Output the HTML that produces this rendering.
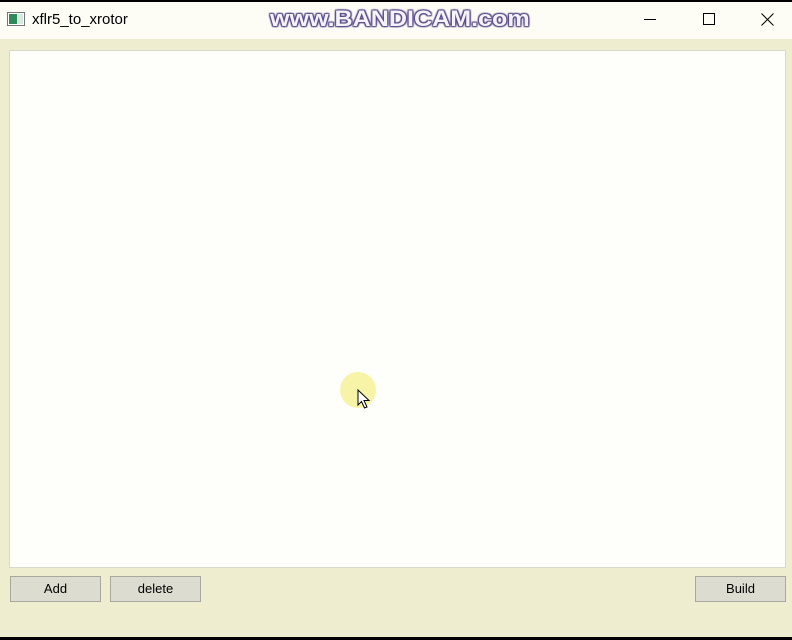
<!DOCTYPE html>
<html><head><meta charset="utf-8"><style>
html,body{margin:0;padding:0;width:792px;height:640px;overflow:hidden;background:#efedcf;font-family:"Liberation Sans",sans-serif;}
#top{position:absolute;left:0;top:0;width:792px;height:2px;background:#000}
#title{position:absolute;left:0;top:2px;width:792px;height:37px;background:#fdfdf6}
#bottom{position:absolute;left:0;top:637px;width:792px;height:3px;background:#000}
#panel{position:absolute;left:9px;top:50px;width:775px;height:516px;background:#fefefa;border:1px solid #d8d8cc}
.btn{position:absolute;top:576px;width:89px;height:24px;background:#dddcd0;border:1px solid #a8a8a0;font-size:13px;line-height:24px;text-align:center;color:#000}
.wm{position:absolute;left:270px;top:4px;font-size:22px;font-weight:bold;color:#f4f4f8;transform:scaleX(1.14);transform-origin:left top;text-shadow:0 0 2px #5a4a8a,1px 1px 1px #5a4a8a,-1px -1px 1px #5a4a8a,1px -1px 1px #5a4a8a,-1px 1px 1px #5a4a8a}
</style></head><body>
<div id="top"></div>
<div id="title">
 <svg style="position:absolute;left:7px;top:10px" width="18" height="14"><rect x="0.5" y="0.5" width="17" height="13" fill="#fff" stroke="#777"/><rect x="2" y="2" width="8" height="10" fill="#2f8a5a"/><rect x="10" y="2" width="6" height="10" fill="#d8e8e0"/></svg>
 <div style="position:absolute;left:32px;top:9px;font-size:15px;color:#000">xflr5_to_xrotor</div>
 <div class="wm">www.BANDICAM.com</div>
 <div style="position:absolute;left:644px;top:17px;width:12px;height:1px;background:#000"></div>
 <div style="position:absolute;left:703px;top:11px;width:10px;height:10px;border:1px solid #000"></div>
 <svg style="position:absolute;left:761px;top:11px" width="13" height="13"><path d="M0.5 0.5L12.5 12.5M12.5 0.5L0.5 12.5" stroke="#000" stroke-width="1"/></svg>
</div>
<div id="panel"></div>
<div style="position:absolute;left:340px;top:372px;width:36px;height:36px;border-radius:50%;background:#f7f4a8"></div>
<svg style="position:absolute;left:357px;top:389px" width="14" height="22"><path d="M1 1L1 16L4.5 12.5L7.5 19L10 18L7 11.5L12 11.5Z" fill="#fff" stroke="#000" stroke-width="1"/></svg>
<div class="btn" style="left:10px">Add</div>
<div class="btn" style="left:110px">delete</div>
<div class="btn" style="left:695px">Build</div>
<div id="bottom"></div>
</body></html>
